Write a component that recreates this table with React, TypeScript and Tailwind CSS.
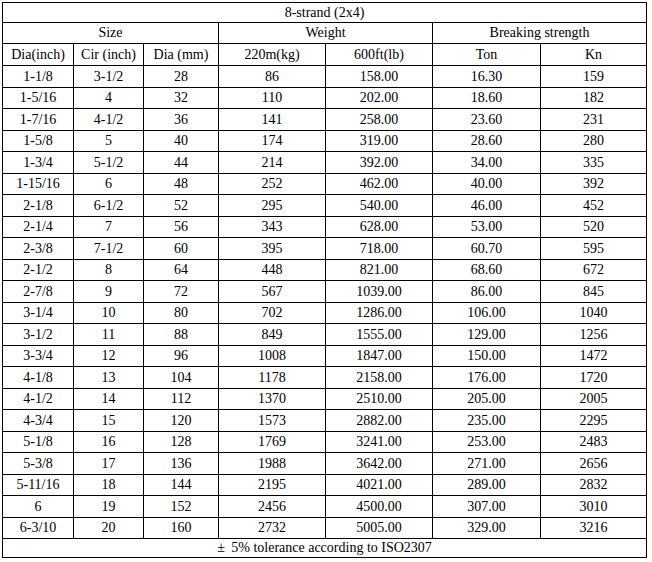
const rows: [string, string, string, string, string, string, string][] = [
  ['1-1/8', '3-1/2', '28', '86', '158.00', '16.30', '159'],
  ['1-5/16', '4', '32', '110', '202.00', '18.60', '182'],
  ['1-7/16', '4-1/2', '36', '141', '258.00', '23.60', '231'],
  ['1-5/8', '5', '40', '174', '319.00', '28.60', '280'],
  ['1-3/4', '5-1/2', '44', '214', '392.00', '34.00', '335'],
  ['1-15/16', '6', '48', '252', '462.00', '40.00', '392'],
  ['2-1/8', '6-1/2', '52', '295', '540.00', '46.00', '452'],
  ['2-1/4', '7', '56', '343', '628.00', '53.00', '520'],
  ['2-3/8', '7-1/2', '60', '395', '718.00', '60.70', '595'],
  ['2-1/2', '8', '64', '448', '821.00', '68.60', '672'],
  ['2-7/8', '9', '72', '567', '1039.00', '86.00', '845'],
  ['3-1/4', '10', '80', '702', '1286.00', '106.00', '1040'],
  ['3-1/2', '11', '88', '849', '1555.00', '129.00', '1256'],
  ['3-3/4', '12', '96', '1008', '1847.00', '150.00', '1472'],
  ['4-1/8', '13', '104', '1178', '2158.00', '176.00', '1720'],
  ['4-1/2', '14', '112', '1370', '2510.00', '205.00', '2005'],
  ['4-3/4', '15', '120', '1573', '2882.00', '235.00', '2295'],
  ['5-1/8', '16', '128', '1769', '3241.00', '253.00', '2483'],
  ['5-3/8', '17', '136', '1988', '3642.00', '271.00', '2656'],
  ['5-11/16', '18', '144', '2195', '4021.00', '289.00', '2832'],
  ['6', '19', '152', '2456', '4500.00', '307.00', '3010'],
  ['6-3/10', '20', '160', '2732', '5005.00', '329.00', '3216'],
]

const cell = 'border border-black p-0 text-center align-middle'

export default function App() {
  return (
    <div className="min-h-[562px] bg-white pl-[2px] pt-[2px] text-[14px] leading-none text-black [font-family:'Liberation_Serif','Times_New_Roman',serif]">
      <table className="w-[644px] table-fixed border-collapse border border-black">
        <colgroup>
          <col className="w-[71px]" />
          <col className="w-[70px]" />
          <col className="w-[75px]" />
          <col className="w-[107px]" />
          <col className="w-[107px]" />
          <col className="w-[108px]" />
          <col className="w-[106px]" />
        </colgroup>
        <tbody>
          <tr className="h-[20px]">
            <td colSpan={7} className={cell}>
              8-strand (2x4)
            </td>
          </tr>
          <tr className="h-[21px]">
            <td colSpan={3} className={cell}>
              Size
            </td>
            <td colSpan={2} className={cell}>
              Weight
            </td>
            <td colSpan={2} className={cell}>
              Breaking strength
            </td>
          </tr>
          <tr className="h-[22px]">
            <td className={cell}>Dia(inch)</td>
            <td className={cell}>Cir (inch)</td>
            <td className={cell}>Dia (mm)</td>
            <td className={cell}>220m(kg)</td>
            <td className={cell}>600ft(lb)</td>
            <td className={cell}>Ton</td>
            <td className={cell}>Kn</td>
          </tr>
          {rows.map((row, i) => (
            <tr key={row[0]} className={i % 2 === 0 ? 'h-[22px]' : 'h-[21px]'}>
              {row.map((value, j) => (
                <td key={j} className={cell}>
                  {value}
                </td>
              ))}
            </tr>
          ))}
          <tr className="h-[19px]">
            <td colSpan={7} className={cell}>
              <span className="inline-block w-[14px] text-left">±</span>5% tolerance according to ISO2307
            </td>
          </tr>
        </tbody>
      </table>
    </div>
  )
}
